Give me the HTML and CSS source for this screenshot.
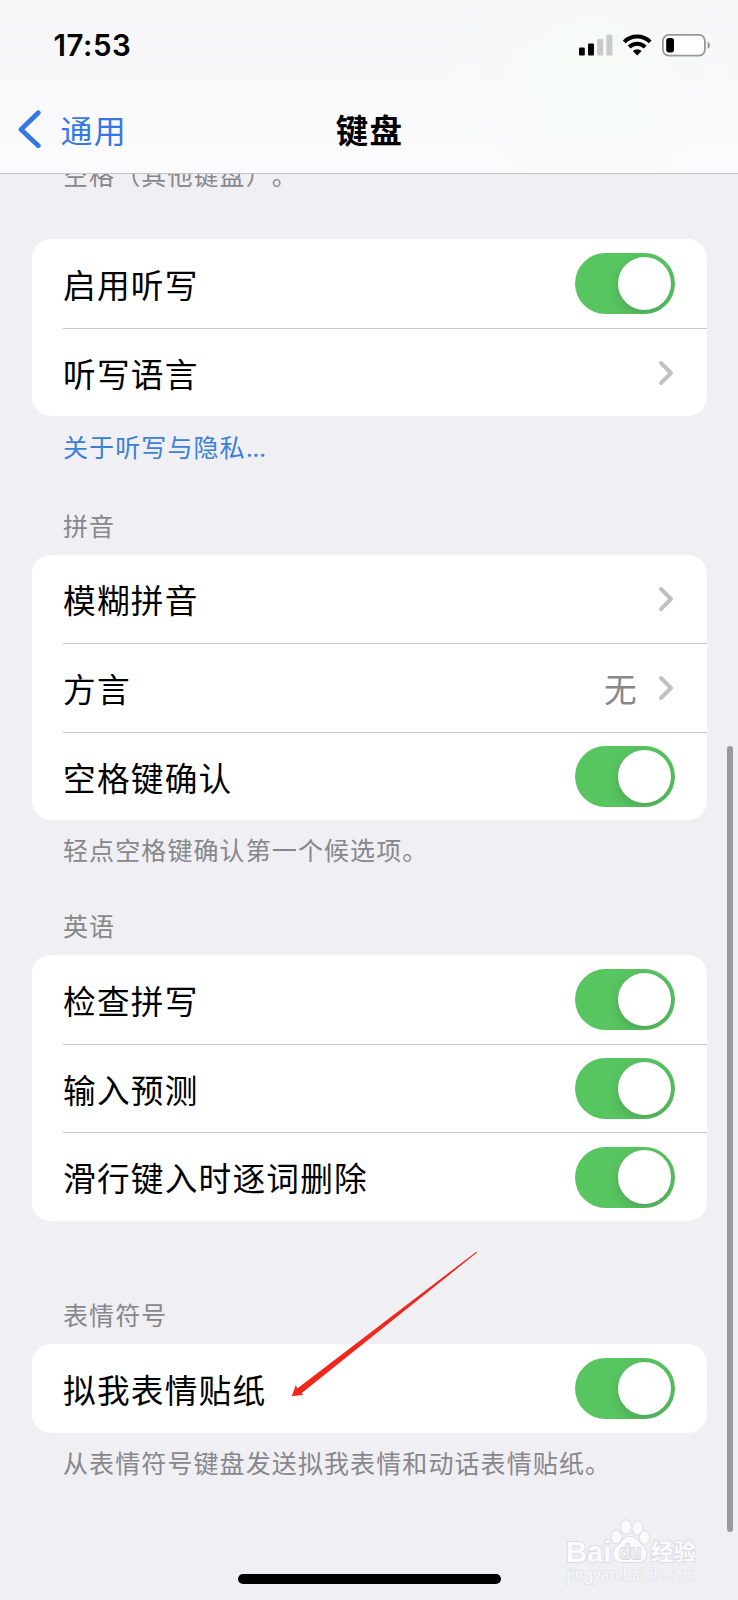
FILE: index.html
```html
<!DOCTYPE html>
<html lang="zh-CN">
<head>
<meta charset="utf-8">
<title>键盘</title>
<link rel="stylesheet" href="styles.css">
</head>
<body>
<div class="screen">
  <header class="header">
    <div class="status">
      <span class="time">17:53</span>
      <svg class="status-icons" width="134" height="26" viewBox="0 0 134 26">
        <rect x="1" y="14.5" width="5.8" height="8" rx="1.3"/>
        <rect x="10" y="10.5" width="6" height="12" rx="1.3"/>
        <rect x="19.2" y="6" width="6" height="16.5" rx="1.3" fill="#c9cbca"/>
        <rect x="28.4" y="1.5" width="6" height="21" rx="1.3" fill="#c9cbca"/>
        <g fill="none" stroke="#000" stroke-width="4">
          <path d="M46.2 8.8a18.5 18.5 0 0 1 26 0"/>
          <path d="M51.2 14a11.4 11.4 0 0 1 16 0"/>
        </g>
        <path d="M59.2 22.6l-4.4-4.5a6.3 6.3 0 0 1 8.8 0z"/>
        <rect x="84.9" y="1.9" width="42" height="20.8" rx="6" fill="#fdfefd" stroke="#979998" stroke-width="1.8"/>
        <rect x="88.2" y="5" width="7.8" height="14.4" rx="2.6"/>
        <path d="M129.7 8.8c3.1 1.2 3.1 5.8 0 7z" fill="#979998"/>
      </svg>
    </div>
    <nav class="nav">
      <div class="back">
        <svg width="24" height="38" viewBox="0 0 24 38"><path d="M20.300 2.800L3 19.500l17.300 16.200" fill="none" stroke="#3478e5" stroke-width="4.800" stroke-linecap="round" stroke-linejoin="round"/></svg>
        <span>通用</span>
      </div>
      <h1 class="title">键盘</h1>
    </nav>
  </header>
  <main class="content">
    <p class="note clipped">空格（其他键盘）。</p>
    <section class="card">
      <div class="row"><span>启用听写</span><i class="toggle"></i></div>
      <div class="row"><span>听写语言</span><svg class="chevron" width="16" height="26" viewBox="0 0 16 26"><path d="M3 3l10 10L3 23"/></svg></div>
    </section>
    <p class="note link">关于听写与隐私<span class="dots">...</span></p>
    <h2 class="heading pinyin">拼音</h2>
    <section class="card">
      <div class="row"><span>模糊拼音</span><svg class="chevron" width="16" height="26" viewBox="0 0 16 26"><path d="M3 3l10 10L3 23"/></svg></div>
      <div class="row"><span>方言</span><span class="value">无</span><svg class="chevron" width="16" height="26" viewBox="0 0 16 26"><path d="M3 3l10 10L3 23"/></svg></div>
      <div class="row"><span>空格键确认</span><i class="toggle"></i></div>
    </section>
    <p class="note tight">轻点空格键确认第一个候选项。</p>
    <h2 class="heading english">英语</h2>
    <section class="card">
      <div class="row"><span>检查拼写</span><i class="toggle"></i></div>
      <div class="row"><span>输入预测</span><i class="toggle"></i></div>
      <div class="row"><span>滑行键入时逐词删除</span><i class="toggle"></i></div>
    </section>
    <h2 class="heading emoji">表情符号</h2>
    <section class="card">
      <div class="row"><span>拟我表情贴纸</span><i class="toggle"></i></div>
    </section>
    <p class="note tight">从表情符号键盘发送拟我表情和动话表情贴纸。</p>
  </main>
  <svg class="arrow" width="190" height="148" viewBox="290 1250 190 148"><path d="M291.700 1396.200L295.800 1385L297.300 1388.500L476.300 1251.700L477 1252.600L301.500 1393.200L303.800 1394.700Z" fill="#f1271b"/></svg>
  <svg class="watermark" width="150" height="80" viewBox="558 1512 150 80">
    <g class="mark">
      <text class="brand" x="566" y="1561.500" textLength="45.500" lengthAdjust="spacingAndGlyphs">Bai</text>
      <path d="M630 1537c7 0 9 6 13 9.500 6 5 4 15.500-4 15.500h-18c-8 0-10-10-4-15.500 4-3.500 6-9.500 13-9.500z"/>
      <ellipse cx="616.500" cy="1537" rx="5" ry="6.500"/>
      <ellipse cx="626" cy="1527" rx="5" ry="6.800"/>
      <ellipse cx="637.500" cy="1528" rx="5" ry="6.500" transform="rotate(8 637.500 1528)"/>
      <ellipse cx="644.700" cy="1537.500" rx="4.800" ry="6.300"/>
      <text class="brand-cn" x="651" y="1560" textLength="45" lengthAdjust="spacingAndGlyphs">经验</text>
      <text class="url" x="567" y="1580" textLength="130" lengthAdjust="spacingAndGlyphs">jingyan.baidu.com</text>
      <text class="du" x="619" y="1559" textLength="22" lengthAdjust="spacingAndGlyphs">du</text>
    </g>
  </svg>
  <div class="scrollbar"></div>
  <div class="home"></div>
</div>
</body>
</html>
```
FILE: styles.css
```css
* { box-sizing: border-box; margin: 0; padding: 0; }
body { background: #f0eff4; }
.screen {
  position: relative;
  width: 738px;
  height: 1600px;
  overflow: hidden;
  background: #f0eff4;
  color: #000;
  font-family: "Noto Sans CJK SC", sans-serif;
}
.header {
  height: 174px;
  border-bottom: 1px solid #c6c6c9;
  background: radial-gradient(circle at 590px 80px, #f5fbf7 0, rgba(247,249,248,0) 150px), linear-gradient(#f6f6f7, #fbfbfd);
}
.status {
  height: 90px;
  padding: 33px 26px 0 53.5px;
  display: flex;
  justify-content: space-between;
  align-items: flex-start;
}
.time { font: 600 29.5px/25px Inter, sans-serif; letter-spacing: .5px; }
.status-icons { display: block; }
.nav {
  height: 80px;
  padding: 0 17px 2px 18px;
  display: grid;
  grid-template-columns: 1fr auto 1fr;
  align-items: center;
}
.back { display: flex; align-items: center; gap: 18.5px; color: #3478e5; font-size: 32px; letter-spacing: 1.2px; line-height: 42px; }
.back span { padding-bottom: 1px; }
.title { padding-bottom: 1px; font-size: 32.5px; font-weight: 700; letter-spacing: 1.3px; line-height: 42px; }
.content { height: 1426px; padding: 0 31.5px; overflow: hidden; }
.note, .heading {
  padding-left: 31.5px;
  font-size: 25px;
  font-weight: 400;
  letter-spacing: 1.1px;
  line-height: 36px;
  color: #87878c;
  white-space: nowrap;
  text-spacing-trim: space-all;
}
.note { height: 36px; margin-top: 12px; }
.note.tight { height: 37px; margin-top: 11px; }
.note.clipped { margin: -18px 0 47.3px; }
.note.link { color: #3a80d9; }
.dots { font-family: Inter, sans-serif; letter-spacing: -.6px; }
.pinyin { margin: 42.3px 0 12.3px; }
.english { margin: 39px 0 11.9px; }
.emoji { margin: 75.5px 0 12.2px; }
.card { border-radius: 19px; background: #fff; }
.row {
  height: 88.5px;
  margin-left: 31.5px;
  padding-right: 31.5px;
  display: flex;
  align-items: center;
  font-size: 32.7px;
  letter-spacing: 1.2px;
  line-height: 44px;
}
.row + .row { border-top: 1px solid #c9c9cc; }
.row > span:first-child { margin-right: auto; }
.value { margin-right: 20px; color: #87878c; }
.chevron { margin-right: 1px; fill: none; stroke: #c1c1c4; stroke-width: 4; stroke-linecap: round; stroke-linejoin: round; }
.toggle {
  width: 100.5px;
  height: 61px;
  padding: 3.75px 4px 3.75px 43px;
  border-radius: 31px;
  overflow: hidden;
  background: #58c660;
}
.toggle::before {
  content: "";
  display: block;
  width: 53.5px;
  height: 53.5px;
  border-radius: 50%;
  background: #fff;
  box-shadow: 0 4px 12px rgba(40, 60, 50, .24);
}
.arrow { position: absolute; left: 290px; top: 1250px; }
.watermark { position: absolute; left: 558px; top: 1512px; }
.mark { fill: #fbfbfd; stroke: #dcdce1; stroke-width: 1.8px; paint-order: stroke; }
.brand { font: 700 29px "Liberation Sans", sans-serif; }
.brand-cn { font: 700 23px "Noto Sans CJK SC", sans-serif; }
.url { font: 400 16.5px "Noto Sans", sans-serif; stroke-width: 1.2px; }
.du { font: 700 21px "Liberation Sans", sans-serif; fill: #eeeef3; stroke: #d4d4da; }
.scrollbar { position: absolute; left: 726.5px; top: 746px; width: 6px; height: 786px; border-radius: 3px; background: #98989d; }
.home { position: absolute; left: 237.5px; top: 1574px; width: 263.5px; height: 10px; border-radius: 5px; background: #000; }
```
